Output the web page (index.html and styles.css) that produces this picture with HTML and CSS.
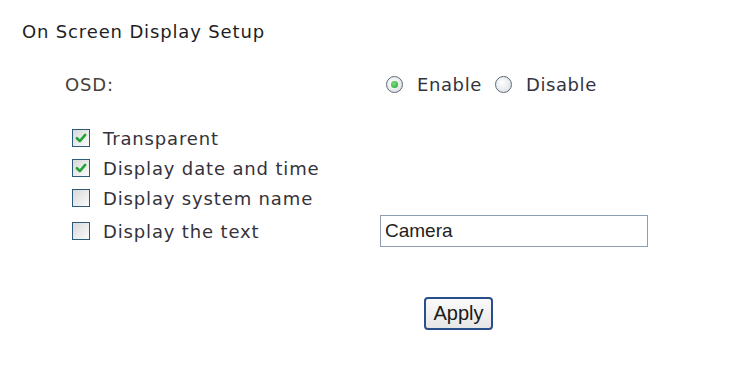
FILE: index.html
```html
<!DOCTYPE html>
<html lang="en">
<head>
  <meta charset="UTF-8">
  <title>On Screen Display Setup</title>
  <link rel="stylesheet" href="styles.css">
</head>
<body>

  <div class="page">
    <h1 class="title">On Screen Display Setup</h1>

    <div class="osd-row">
      <span class="osd-label">OSD:</span>
      <div class="radios">
        <span class="radio checked"></span><span class="radio-text">Enable</span>
        <span class="radio"></span><span class="radio-text">Disable</span>
      </div>
    </div>

    <div class="options">
      <div class="option">
        <span class="check checked"><svg viewBox="0 0 12 12"><path d="M2.5 6.2 L5 8.6 L9.6 3.4" /></svg></span>
        <span class="option-text">Transparent</span>
      </div>
      <div class="option">
        <span class="check checked"><svg viewBox="0 0 12 12"><path d="M2.5 6.2 L5 8.6 L9.6 3.4" /></svg></span>
        <span class="option-text">Display date and time</span>
      </div>
      <div class="option">
        <span class="check"></span>
        <span class="option-text">Display system name</span>
      </div>
      <div class="option option-text-row">
        <span class="check"></span>
        <span class="option-text">Display the text</span>
        <input class="text-input" type="text" value="Camera">
      </div>
    </div>

    <div class="actions">
      <button class="apply">Apply</button>
    </div>
  </div>

</body>
</html>
```

FILE: styles.css
```css
body {
  margin: 0;
  font-family: 'DejaVu Sans', Verdana, sans-serif;
  font-size: 18px;
  letter-spacing: 0.85px;
  color: #333;
  background: #fff;
}

.page {
  padding: 21px 0 0 22px;
}

.title {
  margin: 0;
  font-size: 18px;
  font-weight: normal;
  color: #1e1e24;
  line-height: 22px;
}

.osd-row {
  display: flex;
  align-items: center;
  margin-top: 30px;
  padding-left: 43px;
  height: 22px;
}

.osd-label {
  width: 321px;
  color: #463f3a;
}

.radios {
  display: flex;
  align-items: center;
}

.radio {
  width: 15px;
  height: 15px;
  border: 1px solid #5a6a7a;
  border-radius: 50%;
  background: radial-gradient(circle at 40% 40%, #fff, #d6d9dc);
  position: relative;
  margin-right: 14px;
}

.radio.checked::after {
  content: "";
  position: absolute;
  left: 4px;
  top: 4px;
  width: 7px;
  height: 7px;
  border-radius: 50%;
  background: radial-gradient(circle at 40% 40%, #7be07b, #1f9a2c);
}

.radio-text {
  margin-right: 13px;
  color: #33333f;
  letter-spacing: 0.6px;
}

.options {
  margin-top: 28px;
  padding-left: 50px;
}

.option {
  display: flex;
  align-items: center;
  height: 30px;
}

.option-text-row {
  height: 36px;
}

.check {
  width: 16px;
  height: 16px;
  border: 1px solid #2c5a7a;
  background: linear-gradient(135deg, #d8d8d8, #fbfbfb);
  margin-right: 13px;
  display: flex;
  align-items: center;
  justify-content: center;
}

.check svg {
  width: 14px;
  height: 14px;
}

.check path {
  fill: none;
  stroke: #21a336;
  stroke-width: 2.2;
  stroke-linecap: round;
  stroke-linejoin: round;
}

.option-text {
  width: 277px;
  color: #35323a;
}

.text-input {
  width: 258px;
  height: 30px;
  margin: 0;
  padding: 0 4px;
  border: 1px solid #8c9eb0;
  font-family: 'Liberation Sans', Arial, sans-serif;
  font-size: 19px;
  letter-spacing: 0;
  color: #222;
}

.actions {
  margin-top: 48px;
  padding-left: 402px;
}

.apply {
  width: 69px;
  height: 33px;
  padding: 0;
  border: 2px solid #2a4e8a;
  border-radius: 4px;
  background: linear-gradient(#fafafa, #e6e6e6);
  font-family: 'Liberation Sans', Arial, sans-serif;
  font-size: 20px;
  letter-spacing: 0;
  color: #1a1a1a;
}
```
